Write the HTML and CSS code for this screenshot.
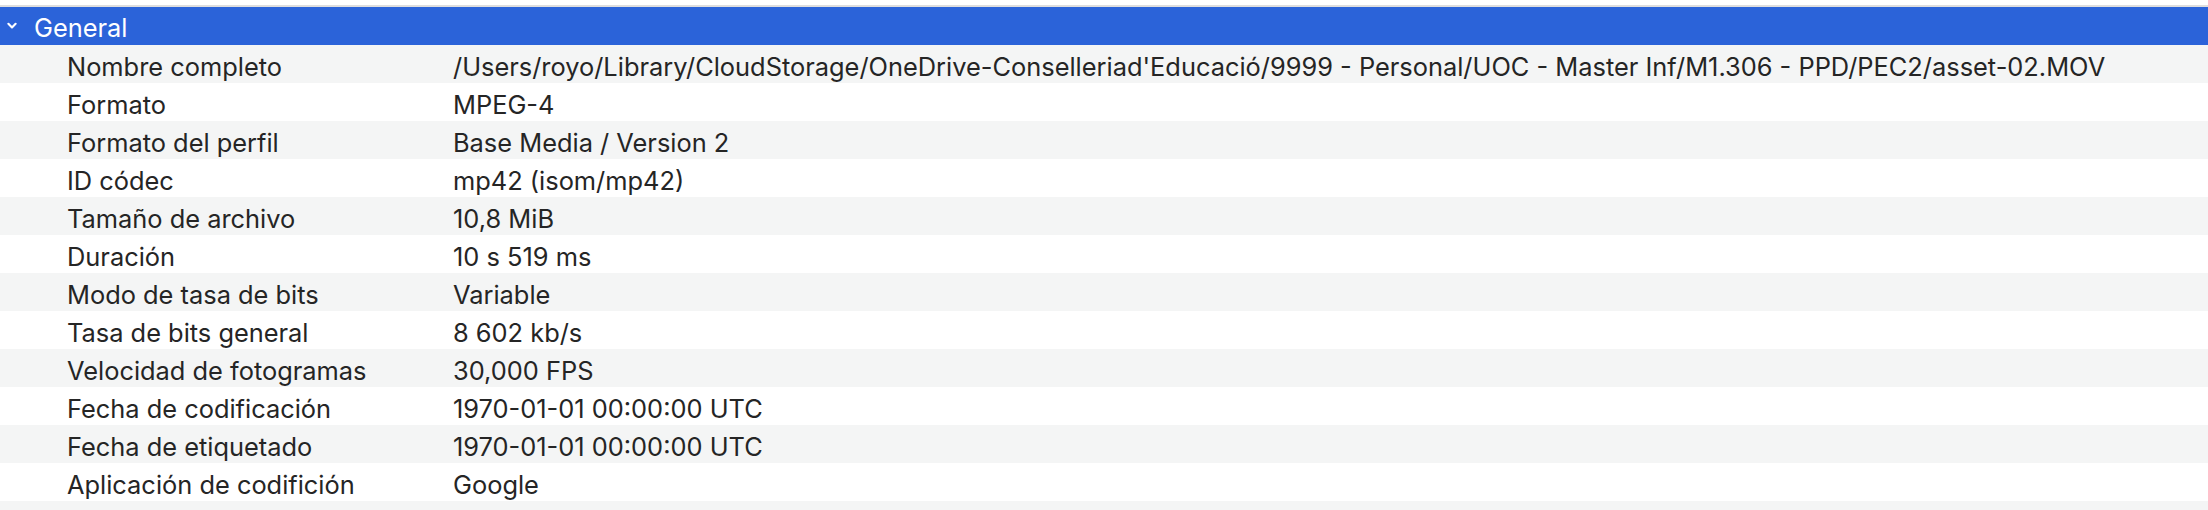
FILE: index.html
```html
<!DOCTYPE html>
<html lang="es">
<head>
<meta charset="utf-8">
<title>General</title>
<link rel="stylesheet" href="styles.css">
</head>
<body>
<div class="panel">
  <div class="section-header">
    <svg class="chevron" width="10" height="8" viewBox="0 0 10 8"><path d="M1.4 1.8 L5 5.5 L8.6 1.8" fill="none" stroke="#fff" stroke-width="2.1" stroke-linecap="round" stroke-linejoin="round"/></svg>
    <span class="section-title">General</span>
  </div>
  <div class="rows">
    <div class="row"><span class="label">Nombre completo</span><span class="value">/Users/royo/Library/CloudStorage/OneDrive-Conselleriad'Educació/9999 - Personal/UOC - Master Inf/M1.306 - PPD/PEC2/asset-02.MOV</span></div>
    <div class="row"><span class="label">Formato</span><span class="value">MPEG-4</span></div>
    <div class="row"><span class="label">Formato del perfil</span><span class="value">Base Media / Version 2</span></div>
    <div class="row"><span class="label">ID códec</span><span class="value">mp42 (isom/mp42)</span></div>
    <div class="row"><span class="label">Tamaño de archivo</span><span class="value">10,8 MiB</span></div>
    <div class="row"><span class="label">Duración</span><span class="value">10 s 519 ms</span></div>
    <div class="row"><span class="label">Modo de tasa de bits</span><span class="value">Variable</span></div>
    <div class="row"><span class="label">Tasa de bits general</span><span class="value">8 602 kb/s</span></div>
    <div class="row"><span class="label">Velocidad de fotogramas</span><span class="value">30,000 FPS</span></div>
    <div class="row"><span class="label">Fecha de codificación</span><span class="value">1970-01-01 00:00:00 UTC</span></div>
    <div class="row"><span class="label">Fecha de etiquetado</span><span class="value">1970-01-01 00:00:00 UTC</span></div>
    <div class="row"><span class="label">Aplicación de codifición</span><span class="value">Google</span></div>
    <div class="row row-partial"></div>
  </div>
</div>
</body>
</html>
```
FILE: styles.css
```css
html, body {
  margin: 0;
  padding: 0;
  background: #ffffff;
}
body {
  font-family: Inter, "Liberation Sans", sans-serif;
  font-size: 25.4px;
  color: #252525;
  overflow: hidden;
  height: 510px;
}
.panel {
  padding-top: 5px;
}
.section-header {
  display: flex;
  align-items: center;
  height: 38px;
  border-top: 2px solid #dedede;
  background: #2b63d9;
  color: #ffffff;
  overflow: hidden;
}
.chevron {
  margin-left: 7px;
  margin-right: 17px;
  flex: none;
}
.section-title {
  line-height: 38px;
  padding-top: 3px;
}
.rows {
  display: flex;
  flex-direction: column;
}
.row {
  display: grid;
  grid-template-columns: 453px 1fr;
  height: 38px;
  line-height: 43px;
  white-space: nowrap;
  overflow: hidden;
}
.row:nth-child(odd) {
  background: #f4f5f5;
}
.row-partial {
  height: 9px;
}
.label {
  padding-left: 67px;
}
```
